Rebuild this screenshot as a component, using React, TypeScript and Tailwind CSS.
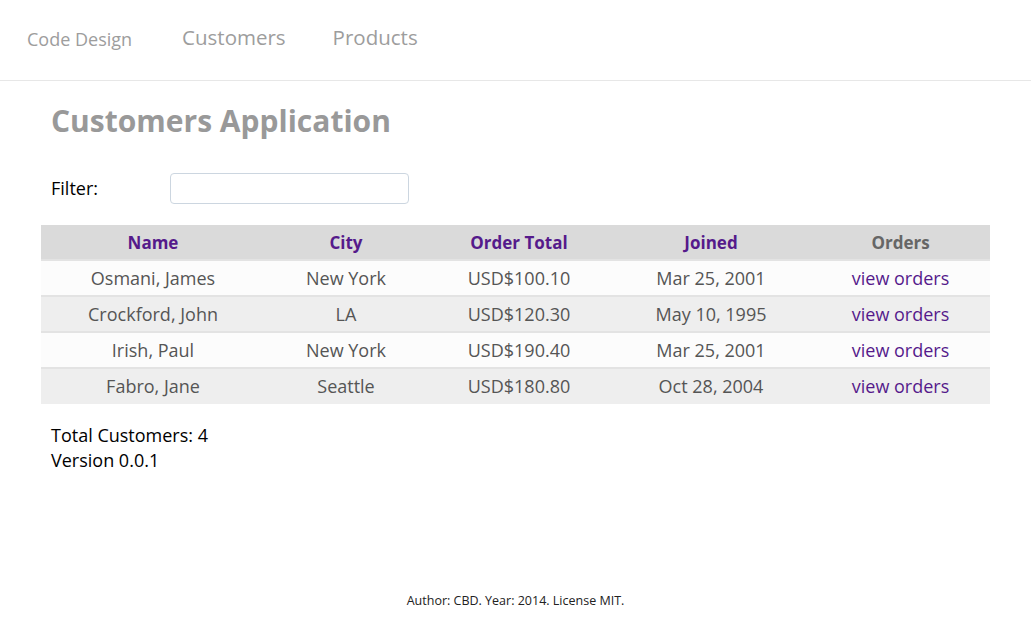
import React from "react";

const rows = [
  { name: "Osmani, James", city: "New York", total: "USD$100.10", joined: "Mar 25, 2001" },
  { name: "Crockford, John", city: "LA", total: "USD$120.30", joined: "May 10, 1995" },
  { name: "Irish, Paul", city: "New York", total: "USD$190.40", joined: "Mar 25, 2001" },
  { name: "Fabro, Jane", city: "Seattle", total: "USD$180.80", joined: "Oct 28, 2004" },
];

export default function App() {
  return (
    <div
      className="w-[1031px] h-[619px] bg-white flex flex-col"
      style={{ fontFamily: '"Open Sans", sans-serif' }}
    >
      <nav className="h-[81px] border-b border-[#e7e7e7] flex items-center pl-[27px] pb-[5px]">
        <span className="text-[18px] text-[#9d9d9d] mr-[50px] pt-[3px]">Code Design</span>
        <span className="text-[20.5px] text-[#9d9d9d] mr-[47px]">Customers</span>
        <span className="text-[20.5px] text-[#9d9d9d]">Products</span>
      </nav>
      <main className="px-[41px] flex-1 flex flex-col">
        <h1 className="ml-[10px] mt-[20px] text-[30px] leading-[40px] font-bold text-[#999]">
          Customers Application
        </h1>
        <div className="ml-[10px] mt-[32px] flex items-center h-[31px]">
          <span className="w-[119px] text-[18px] text-black">Filter:</span>
          <input className="w-[239px] h-[31px] border border-[#ccd6e0] rounded-[4px]" />
        </div>
        <table className="mt-[21px] w-[949px] border-collapse table-fixed">
          <colgroup>
            <col className="w-[224px]" />
            <col className="w-[162px]" />
            <col className="w-[184px]" />
            <col className="w-[200px]" />
            <col className="w-[179px]" />
          </colgroup>
          <thead>
            <tr className="h-[35px] bg-[#dadada] text-[17px] font-bold">
              <th className="text-[#551a8b] font-bold pt-[2px]">Name</th>
              <th className="text-[#551a8b] font-bold pt-[2px]">City</th>
              <th className="text-[#551a8b] font-bold pt-[2px]">Order Total</th>
              <th className="text-[#551a8b] font-bold pt-[2px]">Joined</th>
              <th className="text-[#666] font-bold pt-[2px]">Orders</th>
            </tr>
          </thead>
          <tbody>
            {rows.map((r, i) => (
              <tr
                key={i}
                className={`h-[36px] border-t-2 border-[#e3e3e3] text-[18px] text-[#555] text-center ${
                  i % 2 === 0 ? "bg-[#fcfcfc]" : "bg-[#eeeeee]"
                }`}
              >
                <td>{r.name}</td>
                <td>{r.city}</td>
                <td>{r.total}</td>
                <td>{r.joined}</td>
                <td className="text-[#551a8b]">view orders</td>
              </tr>
            ))}
          </tbody>
        </table>
        <div className="ml-[10px] mt-[19px] text-[18px] leading-[25px] text-black">
          <div>Total Customers: 4</div>
          <div>Version 0.0.1</div>
        </div>
        <footer className="mt-auto mb-[8px] text-center text-[12.5px] text-[#222]">
          Author: CBD. Year: 2014. License MIT.
        </footer>
      </main>
    </div>
  );
}
